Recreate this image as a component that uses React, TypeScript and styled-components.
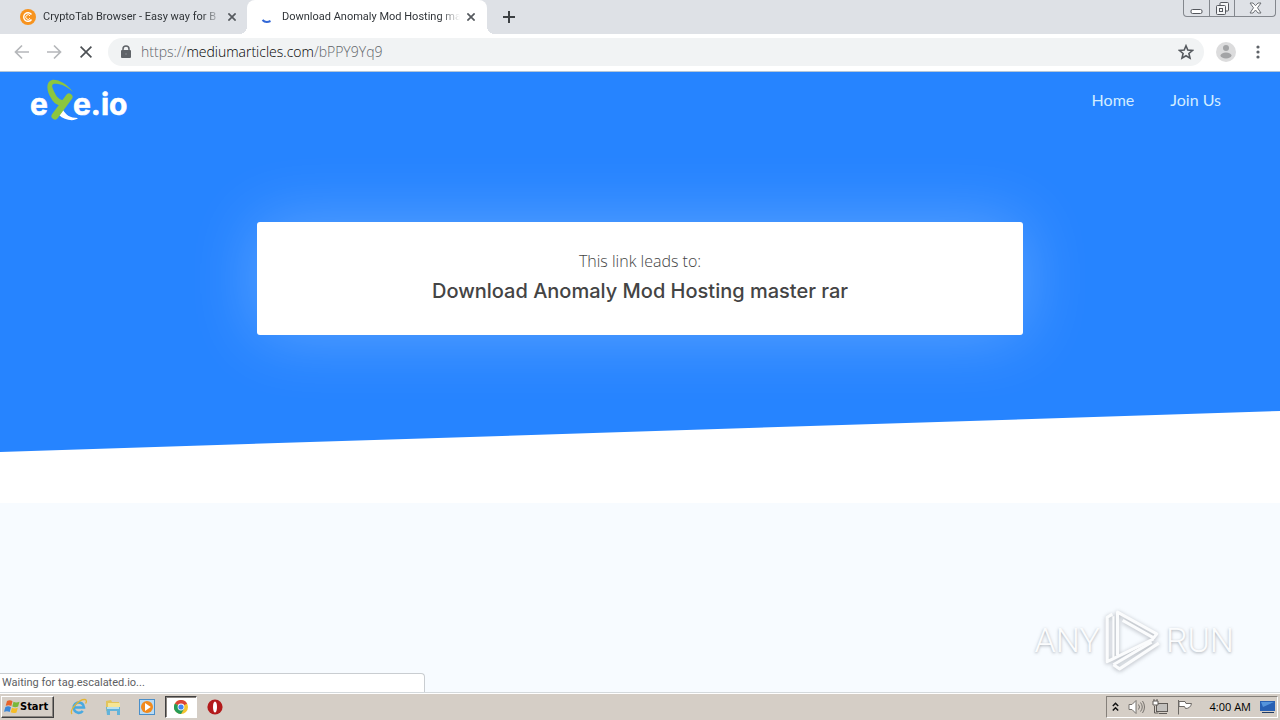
import React from "react";
import styled, { createGlobalStyle } from "styled-components";

const GlobalStyle = createGlobalStyle`
  *, *::before, *::after { box-sizing: border-box; }
  body { margin: 0; font-family: "Open Sans", "Noto Sans", sans-serif; }
  button, input { font: inherit; color: inherit; }
  button { border: 0; padding: 0; background: none; }
  svg { display: block; flex: none; }
`;

const uiFont = `"Open Sans", "Noto Sans", sans-serif`;
const smallFont = `Roboto, "Liberation Sans", sans-serif`;

const Desktop = styled.div`
  display: flex;
  flex-direction: column;
  min-height: 100vh;
`;

const TabStrip = styled.header`
  display: flex;
  height: 34px;
  background: #dee1e6;
`;

const Tab = styled.div<{ $active?: boolean }>`
  position: relative;
  display: flex;
  align-items: center;
  width: ${(p) => (p.$active ? 240 : 247)}px;
  padding: 0 10px 0 ${(p) => (p.$active ? 12 : 20)}px;
  border-radius: 8px 8px 0 0;
  background: ${(p) => (p.$active ? "#fff" : "transparent")};
  color: #303438;

  &::before,
  &::after {
    content: "";
    display: ${(p) => (p.$active ? "block" : "none")};
    position: absolute;
    bottom: 0;
    width: 8px;
    height: 8px;
  }
  &::before {
    right: 100%;
    background: radial-gradient(circle at 0 0, transparent 8px, #fff 8px);
  }
  &::after {
    left: 100%;
    background: radial-gradient(circle at 100% 0, transparent 8px, #fff 8px);
  }
`;

const TabTitle = styled.span`
  flex: 1;
  min-width: 0;
  margin: 0 5px 0 7px;
  overflow: hidden;
  white-space: nowrap;
  font: 11px/16px ${smallFont};
  mask-image: linear-gradient(to right, #000 calc(100% - 20px), transparent);
`;

const IconButton = styled.button<{ $size?: number }>`
  display: flex;
  align-items: center;
  justify-content: center;
  flex: none;
  width: ${(p) => p.$size ?? 16}px;
  height: ${(p) => p.$size ?? 16}px;
`;

const NewTab = styled(IconButton)`
  align-self: center;
  margin-left: 14px;
`;

const WindowControls = styled.div`
  display: flex;
  height: 17px;
  margin: 0 4px 0 auto;
  border: 1px solid #83878d;
  border-top: 0;
  border-radius: 0 0 4px 4px;
`;

const WindowButton = styled.button<{ $wide?: boolean }>`
  display: flex;
  align-items: center;
  justify-content: center;
  width: ${(p) => (p.$wide ? 41 : 25)}px;

  & + & {
    border-left: 1px solid #83878d;
  }
`;

const Toolbar = styled.div`
  display: flex;
  align-items: center;
  height: 38px;
  padding: 0 13px 1px 14px;
  border-bottom: 1px solid #b4c6d8;
  background: #fff;
`;

const NavButtons = styled.div`
  display: flex;
  gap: 16px;
  margin-right: 14px;
`;

const AddressBar = styled.div`
  display: flex;
  flex: 1;
  align-items: center;
  height: 28px;
  margin-right: 12px;
  padding: 0 10px 0 12px;
  border-radius: 14px;
  background: #f1f3f4;
`;

const Url = styled.span`
  flex: 1;
  margin-left: 9px;
  font: 300 14px/20px ${uiFont};
  color: #5f6469;

  b {
    font-weight: 300;
    color: #000;
  }
`;

const ToolbarEnd = styled.div`
  display: flex;
  align-items: center;
  gap: 13px;
`;

const Viewport = styled.main`
  position: relative;
  display: flex;
  flex: 1;
  flex-direction: column;
  background: #f7fbff;
`;

const HeroBand = styled.section`
  padding-bottom: 51px;
  background: #fff;
`;

const Hero = styled.div`
  padding-bottom: 117px;
  background: #2684ff;
  clip-path: polygon(0 0, 100% 0, 100% calc(100% - 41px), 0 100%);
`;

const SiteHeader = styled.div`
  display: flex;
  align-items: center;
  justify-content: space-between;
  height: 56px;
  padding: 0 59px 0 30px;
`;

const SiteNav = styled.nav`
  display: flex;
  gap: 36px;

  a {
    color: #d3edff;
    font: 16px/20px Lato, sans-serif;
    text-decoration: none;
  }
`;

const LinkCard = styled.div`
  width: 60%;
  min-width: 320px;
  max-width: 766px;
  margin: 94px auto 0;
  padding: 27px 30px 30px;
  border-radius: 3px;
  background: #fff;
  box-shadow: 0 0 70px rgba(255, 255, 255, 0.26);
  color: #444;
  text-align: center;

  p {
    margin: 0;
    font: 300 16px/24px ${uiFont};
  }
  h1 {
    margin: 4px 0 0;
    font: 500 20px/28px Inter, sans-serif;
  }
`;

const StatusBubble = styled.div`
  position: absolute;
  bottom: 0;
  left: 0;
  width: 425px;
  height: 19px;
  padding: 0 2px;
  border: solid #c9cdd1;
  border-width: 1px 1px 0 0;
  border-radius: 0 4px 0 0;
  background: #fff;
  color: #5d6063;
  font: 11px/18px ${smallFont};
`;

const Watermark = styled.div`
  position: absolute;
  right: 46px;
  bottom: 19px;
  display: flex;
  align-items: center;
  gap: 4px;
  color: #fbfcfd;
  font: 300 34px/66px Roboto, sans-serif;
  text-shadow: 0 1px 3px rgba(90, 95, 105, 0.5);

  svg {
    filter: drop-shadow(0 1px 2px rgba(90, 95, 105, 0.45));
  }
`;

const Taskbar = styled.footer`
  display: flex;
  align-items: center;
  height: 28px;
  padding: 2px 2px 1px 1px;
  border-top: 1px solid #d4d9dc;
  background: #d5cec6;
  box-shadow: inset 0 1px #fff;
`;

const StartButton = styled.button`
  display: flex;
  align-items: center;
  width: 53px;
  height: 22px;
  margin-right: 9px;
  padding: 0 2px;
  border: 1px solid;
  border-color: #fff #404040 #404040 #fff;
  box-shadow: inset -1px -1px #8a8580;
  color: #000;
  font: bold 11px/16px "DejaVu Sans Condensed", "DejaVu Sans", sans-serif;
`;

const TaskButton = styled.button<{ $active?: boolean }>`
  display: flex;
  align-items: center;
  justify-content: center;
  width: 32px;
  height: 22px;
  margin-right: 2px;
  border: 1px solid transparent;
  ${(p) =>
    p.$active &&
    "background: #fff; border-color: #404040 #fff #fff #404040; box-shadow: inset 1px 1px #8a8580;"}
`;

const Tray = styled.div`
  display: flex;
  align-items: center;
  height: 22px;
  margin-left: auto;
  padding: 0 1px 0 4px;
  border: 1px solid;
  border-color: #85807a #fff #fff #85807a;

  time {
    margin: 0 9px 0 10px;
    color: #000;
    font: 11px/16px ${uiFont};
  }
`;

const TrayButton = styled(IconButton)`
  width: 18px;
  margin-right: 6px;

  &:first-child {
    width: 10px;
    margin-right: 7px;
  }
`;

const Cross = ({ size = 8, color = "#55595e" }) => (
  <svg width={size} height={size} viewBox="0 0 8 8" stroke={color} strokeWidth={size > 8 ? 1.1 : 1.7}>
    <path d="M.4.4l7.2 7.2M7.600.4L.4 7.600" />
  </svg>
);

const Arrow = ({ forward = false }) => (
  <svg width="16" height="16" viewBox="0 0 16 16" fill="none" stroke="#b5b7ba" strokeWidth="1.7">
    <path d={forward ? "M1 8h13M8 1.5L14.5 8 8 14.5" : "M15 8H2M8 1.5L1.5 8 8 14.5"} />
  </svg>
);

const SiteLogo = () => (
  <svg width="100" height="44" viewBox="0 0 100 44" role="img" aria-label="exe.io">
    <g fill="#fff" fontFamily="Inter, sans-serif" fontWeight="700" fontSize="30" stroke="#fff" strokeWidth="0.6">
      <text x="0" y="37">e</text>
      <text x="43" y="37">e.io</text>
    </g>
    <path d="M33 32c3 5 7 8 15 8-4 4-14 2-19-3z" fill="#fff" />
    <path d="M43 14C37 6 28 1 22 2c-7 2-5 12-1 18 2 4 6 8 10 7l2-5c-5 0-8-6-10-11-2-5 0-6 5-5 6 1 11 4 15 8z" fill="#8cc63f" />
    <path d="M39 19L25 38" fill="none" stroke="#8cc63f" strokeWidth="7" strokeLinecap="round" />
  </svg>
);

const PlayLogo = () => (
  <svg width="58" height="64" viewBox="0 0 56 62" fill="none" stroke="#fbfcfd" strokeWidth="3" strokeLinejoin="round">
    <path d="M13 46V4l38 21-3 4L18 12" />
    <path d="M8 6L3 9v43l6-3 39-19" />
    <path d="M9 8v40" strokeWidth="2" />
    <path d="M9 55l6 4 38-25M9 55l37-22" />
  </svg>
);

export default function App() {
  return (
    <Desktop>
      <GlobalStyle />
      <TabStrip>
        <Tab>
          <svg width="16" height="16" viewBox="0 0 16 16">
            <circle cx="8" cy="8" r="8" fill="#f7931e" />
            <path d="M11.500 5.500A4.300 4.300 0 1 0 11.500 10.500" fill="none" stroke="#fff" strokeWidth="1.400" />
            <path d="M10 6.800a2.300 2.300 0 1 0 0 2.500" fill="none" stroke="#fff" />
          </svg>
          <TabTitle>CryptoTab Browser - Easy way for B</TabTitle>
          <IconButton $size={10} aria-label="Close tab"><Cross /></IconButton>
        </Tab>
        <Tab $active>
          <svg width="16" height="16" viewBox="0 0 16 16" fill="none">
            <path d="M3.500 11c2 2.200 5 2.500 8 1" stroke="#3267d6" strokeWidth="2" />
          </svg>
          <TabTitle>Download Anomaly Mod Hosting mas</TabTitle>
          <IconButton $size={12} aria-label="Close tab"><Cross /></IconButton>
        </Tab>
        <NewTab aria-label="New tab">
          <svg width="12" height="12" viewBox="0 0 12 12" stroke="#3c4043" strokeWidth="2">
            <path d="M6 0v12M0 6h12" />
          </svg>
        </NewTab>
        <WindowControls>
          <WindowButton aria-label="Minimize">
            <svg width="13" height="13" viewBox="0 0 13 13">
              <rect x="1" y="7.500" width="11" height="4" rx="1.500" fill="#fff" stroke="#55585e" />
            </svg>
          </WindowButton>
          <WindowButton aria-label="Restore">
            <svg width="13" height="13" viewBox="0 0 13 13" fill="#f4f5f6" stroke="#55585e">
              <rect x="4" y=".5" width="8.500" height="8.500" rx="1" />
              <rect x=".5" y="3.500" width="9" height="9" rx="1" />
              <rect x="3.500" y="6.500" width="3" height="3" />
            </svg>
          </WindowButton>
          <WindowButton $wide aria-label="Close">
            <svg width="13" height="12" viewBox="0 0 13 12">
              <path d="M1 1h3l2.500 2.700L9 1h3L8.500 5.800 12 11H9L6.500 8 4 11H1l3.500-5.200z" fill="#fff" stroke="#6d7075" />
            </svg>
          </WindowButton>
        </WindowControls>
      </TabStrip>

      <Toolbar>
        <NavButtons>
          <IconButton aria-label="Back"><Arrow /></IconButton>
          <IconButton aria-label="Forward"><Arrow forward /></IconButton>
          <IconButton aria-label="Stop loading"><Cross size={12} color="#4c5054" /></IconButton>
        </NavButtons>
        <AddressBar>
          <svg width="12" height="14" viewBox="0 0 12 14">
            <path d="M3 6V4a3 3 0 0 1 6 0v2" fill="none" stroke="#5f6368" strokeWidth="1.500" />
            <rect x="1" y="5" width="10" height="8" rx="1" fill="#5f6368" />
            <circle cx="6" cy="9" r="1" fill="#777b80" />
          </svg>
          <Url>https://<b>mediumarticles.com</b>/bPPY9Yq9</Url>
          <IconButton aria-label="Bookmark this page">
            <svg width="16" height="16" viewBox="0 0 16 16" fill="none" stroke="#55595e" strokeWidth="1.600">
              <path d="M8 1.800l1.800 4.300 4.600.4-3.500 3 1.100 4.600L8 11.700l-4 2.400 1.100-4.600-3.500-3 4.600-.4z" />
            </svg>
          </IconButton>
        </AddressBar>
        <ToolbarEnd>
          <IconButton $size={20} aria-label="Profile">
            <svg width="20" height="20" viewBox="0 0 20 20">
              <circle cx="10" cy="10" r="10" fill="#dcdcdd" />
              <circle cx="10" cy="6" r="3" fill="#a3a4a6" />
              <ellipse cx="10" cy="13.500" rx="5.500" ry="3" fill="#a3a4a6" />
            </svg>
          </IconButton>
          <IconButton $size={18} aria-label="Menu">
            <svg width="4" height="14" viewBox="0 0 4 14" fill="#5f6368">
              <circle cx="2" cy="2" r="1.600" /><circle cx="2" cy="7" r="1.600" /><circle cx="2" cy="12" r="1.600" />
            </svg>
          </IconButton>
        </ToolbarEnd>
      </Toolbar>

      <Viewport>
        <HeroBand>
          <Hero>
            <SiteHeader>
              <SiteLogo />
              <SiteNav>
                <a href="#home">Home</a>
                <a href="#join">Join Us</a>
              </SiteNav>
            </SiteHeader>
            <LinkCard>
              <p>This link leads to:</p>
              <h1>Download Anomaly Mod Hosting master rar</h1>
            </LinkCard>
          </Hero>
        </HeroBand>
        <Watermark>
          <span>ANY</span>
          <PlayLogo />
          <span>RUN</span>
        </Watermark>
        <StatusBubble role="status">Waiting for tag.escalated.io...</StatusBubble>
      </Viewport>

      <Taskbar>
        <StartButton>
          <svg width="16" height="16" viewBox="0 0 16 16">
            <path d="M3 2q3-1.500 5.500.2L7.300 7Q5 5.500 1.700 6.800z" fill="#e8632a" />
            <path d="M9.500 2.800q2.500 1.400 6 0l-1.400 4.800q-3 1.300-5.800-.2z" fill="#79b83b" />
            <path d="M1.400 8q3-1.400 5.600.2L5.700 13Q3.300 11.500 0 12.800z" fill="#3c87d8" />
            <path d="M8 8.700q2.600 1.400 5.800.1l-1.300 4.700q-3 1.300-5.800-.2z" fill="#f6bd27" />
          </svg>
          Start
        </StartButton>
        <TaskButton aria-label="Internet Explorer">
          <svg width="18" height="18" viewBox="0 0 18 18" fill="none">
            <path d="M4 9.500h10A5.200 5.200 0 1 0 12.800 13" stroke="#48a9e0" strokeWidth="2.600" />
            <path d="M2 16C-1 12 9 1 15 1.500c2 .3 1.500 3 .5 4" stroke="#e4b532" strokeWidth="1.300" />
          </svg>
        </TaskButton>
        <TaskButton aria-label="File Explorer">
          <svg width="18" height="18" viewBox="0 0 18 18">
            <path d="M2 3l5-1 1 2h7v9H2z" fill="#e2c45c" />
            <path d="M4 5h12v8H4z" fill="#f6e595" />
            <path d="M2 9h14v8h-3v-4H6v4H3z" fill="#62b3da" />
            <path d="M3 9h12v2H3z" fill="#b9e0ef" />
          </svg>
        </TaskButton>
        <TaskButton aria-label="Media Player">
          <svg width="16" height="16" viewBox="0 0 16 16">
            <rect x=".5" y=".5" width="15" height="15" fill="#b9dbf4" stroke="#4a8fc9" />
            <circle cx="8" cy="8" r="6" fill="#f28a1c" />
            <path d="M6 4L11.800 8 6 12z" fill="#fff" />
          </svg>
        </TaskButton>
        <TaskButton $active aria-label="Chrome">
          <svg width="14" height="14" viewBox="0 0 14 14">
            <circle cx="7" cy="7" r="7" fill="#f4c430" />
            <path d="M7 7L.9 3.500A7 7 0 0 1 13.100 3.500z" fill="#dc4437" />
            <path d="M7 7L.9 3.500A7 7 0 0 0 7 14l3-5z" fill="#269b57" />
            <circle cx="7" cy="7" r="3.400" fill="#fff" />
            <circle cx="7" cy="7" r="2.600" fill="#4285f4" />
          </svg>
        </TaskButton>
        <TaskButton aria-label="Opera">
          <svg width="16" height="16" viewBox="0 0 16 16">
            <circle cx="8" cy="8" r="7.600" fill="#b31a1b" />
            <ellipse cx="8" cy="8" rx="2" ry="5.500" fill="#fff" />
          </svg>
        </TaskButton>
        <Tray>
          <TrayButton aria-label="Show hidden icons">
            <svg width="7" height="10" viewBox="0 0 7 10" fill="none" stroke="#111" strokeWidth="1.500">
              <path d="M.8 4l2.700-2.700L6.200 4M.8 8.500l2.700-2.700 2.700 2.700" />
            </svg>
          </TrayButton>
          <TrayButton aria-label="Volume">
            <svg width="17" height="16" viewBox="0 0 17 16" fill="none" stroke="#77736e">
              <path d="M1 5.500h3l4-4v13l-4-4H1z" fill="#fff" />
              <path d="M10.500 5.500q2 2.500 0 5M12.500 3.500q3.500 4.500 0 9M14.500 2q4 6 0 12" />
            </svg>
          </TrayButton>
          <TrayButton aria-label="Network">
            <svg width="17" height="16" viewBox="0 0 17 16" stroke="#5f5b57">
              <rect x="4.500" y="4.500" width="11" height="8" fill="#c2c0bd" />
              <path d="M7 14.500h8M2.500 7v7h4" fill="none" />
              <path d="M1 2h5v4H1zM2 2V0M5 2V0" fill="#fff" />
            </svg>
          </TrayButton>
          <TrayButton aria-label="Action Center">
            <svg width="17" height="16" viewBox="0 0 17 16" fill="#fff" stroke="#6d6965">
              <path d="M2.500 1v14.500M3 2.500h6l1 2h5.500q-1 5-6 5l-1-2H3z" />
            </svg>
          </TrayButton>
          <time>4:00 AM</time>
          <IconButton aria-label="Show desktop">
            <svg width="16" height="14" viewBox="0 0 16 14">
              <path d="M0 1h15v10H0z" fill="#2860b4" />
              <path d="M1 2h13L3 7z" fill="#5594dc" />
              <path d="M2 12h12v1H2z" fill="#203b64" />
            </svg>
          </IconButton>
        </Tray>
      </Taskbar>
    </Desktop>
  );
}
